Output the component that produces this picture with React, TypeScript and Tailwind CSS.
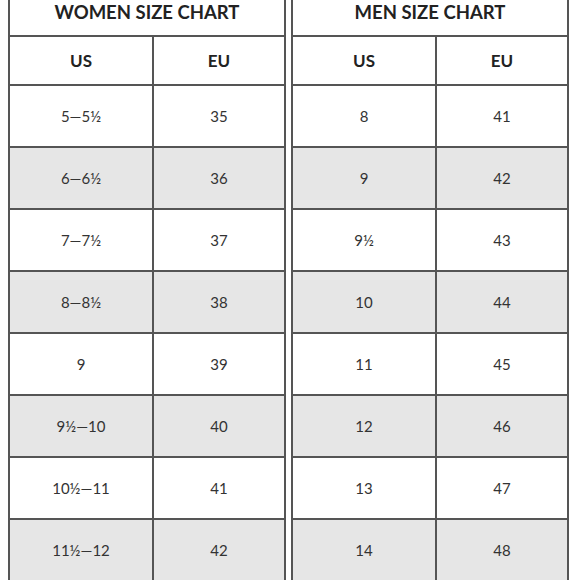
import React from "react";

const women: [string, string][] = [
  ["5—5½", "35"],
  ["6—6½", "36"],
  ["7—7½", "37"],
  ["8—8½", "38"],
  ["9", "39"],
  ["9½—10", "40"],
  ["10½—11", "41"],
  ["11½—12", "42"],
];

const men: [string, string][] = [
  ["8", "41"],
  ["9", "42"],
  ["9½", "43"],
  ["10", "44"],
  ["11", "45"],
  ["12", "46"],
  ["13", "47"],
  ["14", "48"],
];

function Chart({ title, rows }: { title: string; rows: [string, string][] }) {
  return (
    <div className="w-[278px] border-x-2 border-[#555]">
      <div className="h-[37px] border-b-2 border-[#555] flex justify-center pt-[2px]">
        <span className="text-[18.5px] leading-[20px] font-bold text-[#222]">{title}</span>
      </div>
      <div className="grid grid-cols-[144px_1fr] h-[49px] border-b-2 border-[#555]">
        <div className="border-r-2 border-[#555] flex items-center justify-center text-[17px] font-bold text-[#222]">US</div>
        <div className="flex items-center justify-center text-[17px] font-bold text-[#222]">EU</div>
      </div>
      {rows.map(([us, eu], i) => (
        <div
          key={i}
          className={`grid grid-cols-[144px_1fr] h-[62px] border-b-2 border-[#555] ${i % 2 === 1 ? "bg-[#e6e6e6]" : "bg-white"}`}
        >
          <div className="border-r-2 border-[#555] flex items-center justify-center text-[15px] text-[#333]">{us}</div>
          <div className="flex items-center justify-center text-[15px] text-[#333]">{eu}</div>
        </div>
      ))}
    </div>
  );
}

export default function App() {
  return (
    <div className="w-[580px] h-[580px] overflow-hidden bg-white" style={{ fontFamily: "Lato, 'Open Sans', sans-serif" }}>
      <div className="flex gap-[5px] pl-[8px]">
        <Chart title="WOMEN SIZE CHART" rows={women} />
        <Chart title="MEN SIZE CHART" rows={men} />
      </div>
    </div>
  );
}
